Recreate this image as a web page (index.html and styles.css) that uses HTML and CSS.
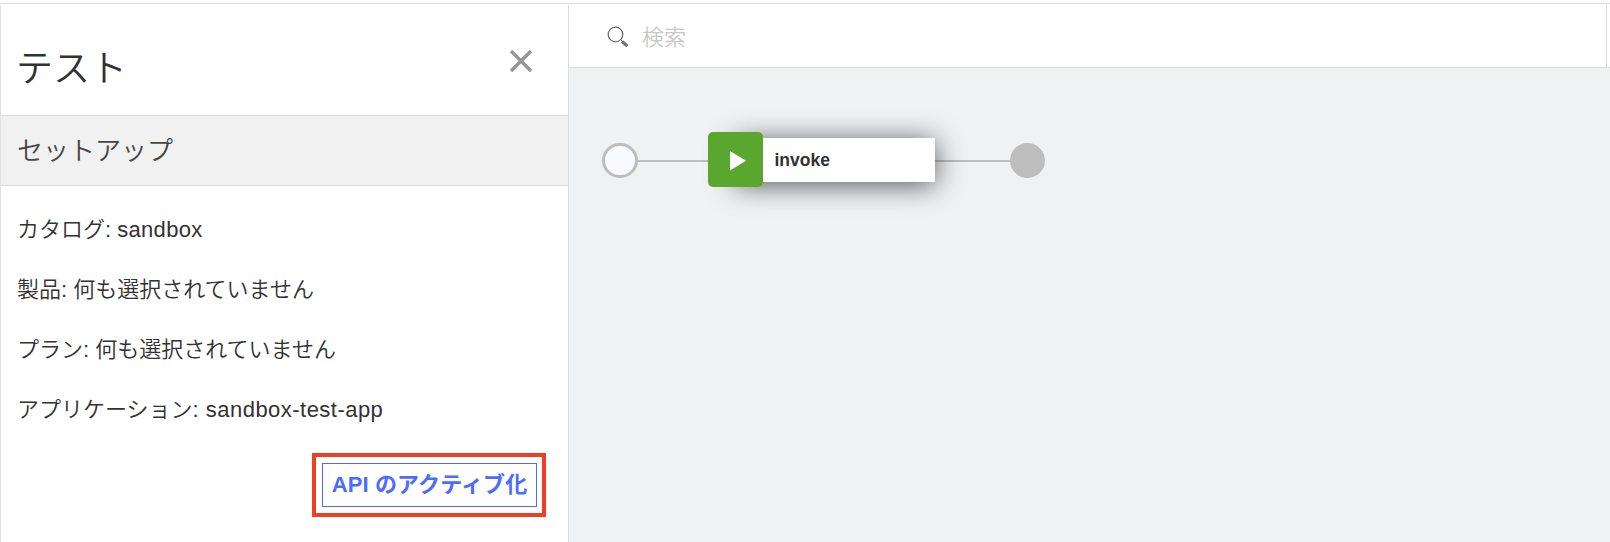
FILE: index.html
```html
<!DOCTYPE html>
<html lang="ja">
<head>
<meta charset="utf-8">
<title>テスト</title>
<link rel="stylesheet" href="styles.css">
</head>
<body>
<div class="app">
  <aside class="panel">
    <header class="panel-header">
      <h1 class="panel-title">テスト</h1>
      <svg class="close" viewBox="0 0 22 22"><path d="M1 1l20 20M21 1L1 21"/></svg>
    </header>
    <h2 class="section-title">セットアップ</h2>
    <div class="setup">
      <p class="row">カタログ: <span class="value">sandbox</span></p>
      <p class="row">製品: 何も選択されていません</p>
      <p class="row">プラン: 何も選択されていません</p>
      <p class="row">アプリケーション: <span class="value value-app">sandbox-test-app</span></p>
      <div class="highlight"><button class="activate">API のアクティブ化</button></div>
    </div>
  </aside>
  <main class="editor">
    <div class="search">
      <svg class="search-icon" viewBox="0 0 22 22"><circle cx="8.500" cy="8.500" r="7.300"/><path class="neck" d="M13.700 13.700l2 2"/><path class="handle" d="M15 15.300l5.300 4.900"/></svg>
      <span class="placeholder">検索</span>
    </div>
    <div class="flow">
      <span class="start"></span>
      <span class="wire wire-in"></span>
      <div class="node">
        <span class="node-icon"><svg viewBox="0 0 16 20"><path d="M0 0L16 9.800L0 19.500z"/></svg></span>
        <span class="node-label">invoke</span>
      </div>
      <span class="wire wire-out"></span>
      <span class="end"></span>
    </div>
  </main>
</div>
</body>
</html>
```
FILE: styles.css
```css
* { box-sizing: border-box; }
body {
  margin: 0;
  background: #fff;
  color: #323232;
  font-family: "Liberation Sans", "Noto Sans CJK JP", sans-serif;
}
.app {
  display: flex;
  height: 542px;
  padding-top: 3px;
  overflow: hidden;
  background: linear-gradient(#dcdee0, #dcdee0) 0 3px / 100% 1px no-repeat;
}
.panel {
  width: 569px;
  margin-top: 2px;
  border-left: 1px solid #dfe3e6;
  border-right: 1px solid #dcdcdc;
  flex: none;
}
.panel-header {
  display: flex;
  justify-content: space-between;
  height: 111px;
  padding: 35px 36px 0 15px;
  border-bottom: 1px solid #dcdcdc;
}
.panel-title {
  margin: 3px 0 0;
  font-size: 37px;
  font-weight: 350;
  line-height: 54px;
}
.close {
  width: 22px;
  height: 22px;
  margin-top: 10px;
  fill: none;
  stroke: #959595;
  stroke-width: 3.3;
  overflow: visible;
}
.section-title {
  height: 70px;
  margin: 0;
  padding: 1px 0 0 16px;
  border-bottom: 1px solid #dcdcdc;
  background: #f1f1f1;
  color: #464646;
  font-size: 26px;
  font-weight: 350;
  line-height: 69px;
}
.setup {
  display: flex;
  flex-direction: column;
  padding: 14px 22px 0 16px;
}
.row {
  margin: 0;
  height: 60px;
  font-size: 22px;
  font-weight: 350;
  line-height: 60px;
  white-space: nowrap;
}
.value { letter-spacing: 0.3px; }
.value-app {
  margin-left: 1px;
  letter-spacing: 0.47px;
}
.highlight {
  align-self: flex-end;
  width: 234px;
  height: 64px;
  margin-top: 13px;
  padding: 6px;
  border: 4px solid #ee3f24;
}
.activate {
  display: block;
  width: 215px;
  height: 44px;
  padding: 0;
  border: 1px solid #4c6bff;
  background: #fff;
  color: #4c6bff;
  font: bold 22px/42px "Liberation Sans", "Noto Sans CJK JP", sans-serif;
  letter-spacing: 0.1px;
  white-space: nowrap;
}
.editor {
  flex: 1;
  margin-top: 1px;
  background: #f0f1f3;
}
.search {
  display: flex;
  height: 64px;
  padding-left: 38px;
  border-bottom: 1px solid #dcdcdc;
  background: linear-gradient(#dcdcdc, #dcdcdc) 1037px 1px / 1px 62px no-repeat #fff;
}
.search-icon {
  width: 22px;
  height: 22px;
  margin-top: 22px;
  fill: none;
  stroke: #707070;
}
.search-icon circle { stroke-width: 1.3; }
.neck { stroke-width: 1; }
.handle { stroke-width: 3.2; }
.placeholder {
  margin-left: 13px;
  color: #c8c8c8;
  font-size: 22px;
  font-weight: 350;
  line-height: 67px;
}
.flow {
  display: flex;
  align-items: center;
  height: 56px;
  margin: 63px 0 0 33px;
}
.start, .end {
  width: 35.5px;
  height: 35.5px;
  margin-top: 3px;
  border: 3px solid #bdbdbd;
  border-radius: 50%;
  background: #f7fbff;
}
.end { background: #bdbdbd; }
.wire {
  height: 2px;
  margin-top: 3px;
  background: #bdbdbd;
}
.wire-in { width: 70.5px; }
.wire-out { width: 74.5px; }
.node {
  position: relative;
  display: flex;
  align-items: center;
  width: 227px;
}
.node::before {
  content: "";
  position: absolute;
  inset: 6px 0 5px 27px;
  background: #fff;
  box-shadow: 0 3px 28px rgba(0, 0, 0, 0.65);
}
.node-icon {
  position: relative;
  width: 55px;
  height: 55px;
  padding: 19px 0 0 22px;
  border-radius: 5px;
  background: #5aa72f;
}
.node-icon svg {
  display: block;
  width: 16px;
  height: 20px;
  fill: #fff;
}
.node-label {
  position: relative;
  margin: 2px 0 0 11.5px;
  font-size: 17.5px;
  font-weight: 700;
}
```
